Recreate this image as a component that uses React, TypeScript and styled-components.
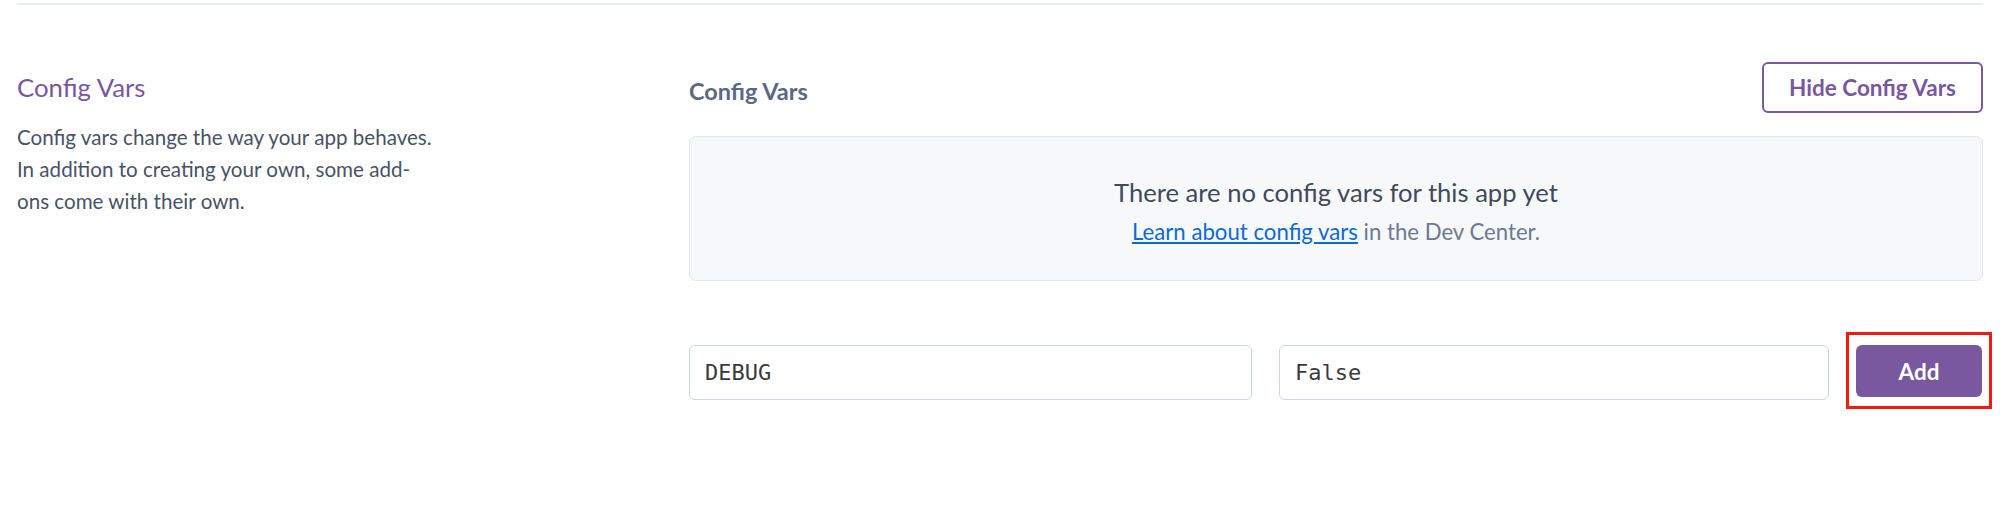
import React from "react";
import styled, { createGlobalStyle } from "styled-components";

const GlobalStyle = createGlobalStyle`
  html, body {
    margin: 0;
    padding: 0;
    background: #ffffff;
  }
  body {
    font-family: Lato, "Open Sans", "Liberation Sans", sans-serif;
    color: #475366;
    -webkit-font-smoothing: antialiased;
  }
  * { box-sizing: border-box; }
`;

const Page = styled.div`
  width: 2000px;
  padding: 3px 17px 0 17px;
`;

const Divider = styled.div`
  height: 2px;
  background: #e9ecf3;
`;

const Section = styled.section`
  display: grid;
  grid-template-columns: 672px minmax(0, 1fr);
  padding-top: 57px;
`;

const Intro = styled.div`
  padding-top: 10px;
`;

const IntroTitle = styled.h3`
  margin: 0;
  font-size: 25.8px;
  line-height: 30px;
  font-weight: 400;
  color: #79589f;
`;

const IntroText = styled.p`
  margin: 19px 0 0;
  font-size: 20.6px;
  line-height: 32px;
  color: #475366;
`;

const Panel = styled.div`
  display: flex;
  flex-direction: column;
  min-width: 0;
`;

const PanelHeader = styled.div`
  display: flex;
  justify-content: space-between;
  align-items: center;
  height: 51px;
`;

const PanelTitle = styled.h4`
  margin: 7px 0 0;
  font-size: 23.5px;
  line-height: 30px;
  font-weight: 700;
  color: #596981;
`;

const OutlineButton = styled.button`
  height: 51px;
  width: 221px;
  border: 2px solid #79589f;
  border-radius: 6px;
  background: #fff;
  color: #79589f;
  font-family: inherit;
  font-size: 22.5px;
  font-weight: 700;
  cursor: pointer;
`;

const EmptyState = styled.div`
  margin-top: 23px;
  height: 145px;
  border: 1px solid #e1e4e9;
  border-radius: 7px;
  background: #f7f8fa;
  display: flex;
  flex-direction: column;
  align-items: center;
  justify-content: center;
  gap: 12px;
  padding-top: 4px;
`;

const EmptyTitle = styled.div`
  font-size: 25.6px;
  line-height: 30px;
  color: #3f4a5c;
`;

const EmptyNote = styled.div`
  font-size: 22.2px;
  line-height: 26px;
  color: #6b7a90;
`;

const DocLink = styled.a`
  color: #0b6bd6;
  text-decoration: underline;
`;

const AddRow = styled.div`
  margin-top: 51px;
  display: flex;
  align-items: center;
`;

const VarInput = styled.input<{ $width: number }>`
  flex: 0 0 ${(p) => p.$width}px;
  height: 55px;
  width: ${(p) => p.$width}px;
  margin: 3px 27px 0 0;
  border: 1px solid #cad5e8;
  border-radius: 6px;
  padding: 0 15px;
  font-family: "DejaVu Sans Mono", "Liberation Mono", monospace;
  font-size: 22px;
  color: #3a3a3d;
  background: #fff;
  outline: none;
`;

const Highlight = styled.div`
  flex: 0 0 auto;
  display: flex;
  margin-left: -10px;
  padding: 10px 7px 9px;
  border: 3px solid #f21b0e;
`;

const PrimaryButton = styled.button`
  height: 52px;
  width: 126px;
  border: none;
  border-radius: 6px;
  background: #79589f;
  color: #fff;
  font-family: inherit;
  font-size: 22.5px;
  font-weight: 700;
  cursor: pointer;
`;

export default function App() {
  return (
    <>
      <GlobalStyle />
      <Page>
        <Divider />
        <Section>
          <Intro>
            <IntroTitle>Config Vars</IntroTitle>
            <IntroText>
              Config vars change the way your app behaves.
              <br />
              In addition to creating your own, some add-
              <br />
              ons come with their own.
            </IntroText>
          </Intro>
          <Panel>
            <PanelHeader>
              <PanelTitle>Config Vars</PanelTitle>
              <OutlineButton>Hide Config Vars</OutlineButton>
            </PanelHeader>
            <EmptyState>
              <EmptyTitle>There are no config vars for this app yet</EmptyTitle>
              <EmptyNote>
                <DocLink href="#">Learn about config vars</DocLink> in the Dev Center.
              </EmptyNote>
            </EmptyState>
            <AddRow>
              <VarInput $width={563} defaultValue="DEBUG" />
              <VarInput $width={550} defaultValue="False" />
              <Highlight>
                <PrimaryButton>Add</PrimaryButton>
              </Highlight>
            </AddRow>
          </Panel>
        </Section>
      </Page>
    </>
  );
}
